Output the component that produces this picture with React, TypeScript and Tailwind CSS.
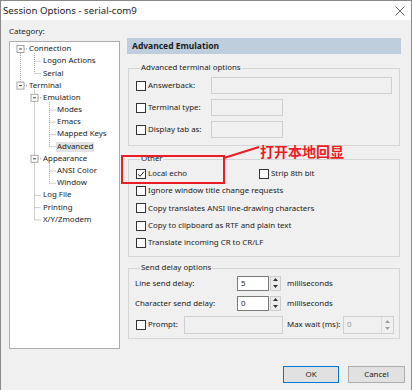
import React from "react";

const rows: { label: string; level: number; hi?: boolean }[] = [
  { label: "Connection", level: 0 },
  { label: "Logon Actions", level: 1 },
  { label: "Serial", level: 1 },
  { label: "Terminal", level: 0 },
  { label: "Emulation", level: 1 },
  { label: "Modes", level: 2 },
  { label: "Emacs", level: 2 },
  { label: "Mapped Keys", level: 2 },
  { label: "Advanced", level: 2, hi: true },
  { label: "Appearance", level: 1 },
  { label: "ANSI Color", level: 2 },
  { label: "Window", level: 2 },
  { label: "Log File", level: 1 },
  { label: "Printing", level: 1 },
  { label: "X/Y/Zmodem", level: 1 },
];

const RH = 12.2;
const cy = (i: number) => 7 + RH * i;

function Box({ checked }: { checked?: boolean }) {
  return (
    <span className="flex h-[10px] w-[10px] shrink-0 items-center justify-center border border-[#333] bg-white">
      {checked && (
        <svg width="8" height="8" viewBox="0 0 8 8">
          <path d="M1 4.2 L3.1 6.3 L7 1.6" stroke="#222" strokeWidth="1" fill="none" />
        </svg>
      )}
    </span>
  );
}

function Spin({ disabled }: { disabled?: boolean }) {
  const c = disabled ? "#a0a0a0" : "#333";
  return (
    <span className="flex h-full flex-col justify-center gap-[1px]">
      <svg width="5" height="3" viewBox="0 0 5 3">
        <path d="M0 3 L2.5 0 L5 3 Z" fill={c} />
      </svg>
      <span className="h-[2px]" />
      <svg width="5" height="3" viewBox="0 0 5 3">
        <path d="M0 0 L2.5 3 L5 0 Z" fill={c} />
      </svg>
    </span>
  );
}

function TreeLines() {
  const exp = (x: number, y: number) => (
    <g key={`e${x}-${y}`}>
      <rect x={x - 3.5} y={y - 3.5} width="7" height="7" fill="#fff" stroke="#a5a5a5" />
      <line x1={x - 1.5} y1={y} x2={x + 1.5} y2={y} stroke="#444" />
    </g>
  );
  const h = (x1: number, x2: number, y: number) => (
    <line key={`h${x1}-${y}`} x1={x1} y1={y} x2={x2} y2={y} stroke="#a0a0a0" strokeDasharray="1 1" />
  );
  const v = (x: number, y1: number, y2: number) => (
    <line key={`v${x}-${y1}`} x1={x} y1={y1} x2={x} y2={y2} stroke="#a0a0a0" strokeDasharray="1 1" />
  );
  return (
    <svg className="pointer-events-none absolute inset-0" width="109" height="305">
      {v(10.5, cy(0), cy(3))}
      {h(14, 18, cy(0))}
      {h(14, 18, cy(3))}
      {v(24.5, cy(0) + 4, cy(2))}
      {h(24.5, 31, cy(1))}
      {h(24.5, 31, cy(2))}
      {v(24.5, cy(3) + 4, cy(14))}
      {h(28, 31, cy(4))}
      {h(28, 31, cy(9))}
      {h(24.5, 31, cy(12))}
      {h(24.5, 31, cy(13))}
      {h(24.5, 31, cy(14))}
      {v(39.5, cy(4) + 4, cy(8))}
      {[5, 6, 7, 8].map((i) => h(39.5, 46, cy(i)))}
      {v(39.5, cy(9) + 4, cy(11))}
      {[10, 11].map((i) => h(39.5, 46, cy(i)))}
      {exp(10.5, cy(0))}
      {exp(10.5, cy(3))}
      {exp(24.5, cy(4))}
      {exp(24.5, cy(9))}
    </svg>
  );
}

export default function App() {
  return (
    <div className="relative h-[390px] w-[412px] overflow-hidden border-x border-t border-[#8a8a8a] bg-[#f0f0f0] font-['Noto_Sans',sans-serif] text-[7.9px] leading-none text-[#1b1b1b]">
      {/* title bar */}
      <div className="flex h-[19px] items-center justify-between bg-white pl-[2px] pr-[6px]">
        <span className="text-[9.7px]">Session Options - serial-com9</span>
        <svg width="10" height="10" viewBox="0 0 10 10">
          <path d="M0.5 0.5 L9.5 9.5 M9.5 0.5 L0.5 9.5" stroke="#555" strokeWidth="0.9" />
        </svg>
      </div>

      <div className="flex items-start">
        {/* category */}
        <div className="ml-[8px] w-[111px] pt-[6px]">
          <div className="flex h-[12px] items-center">Category:</div>
          <div className="relative mt-[3px] h-[308px] border border-[#adadad] bg-white pt-[1px]">
            <TreeLines />
            {rows.map((r) => (
              <div
                key={r.label}
                className={`flex h-[12.2px] items-center ${
                  r.level === 0 ? "pl-[18px]" : r.level === 1 ? "pl-[32px]" : "pl-[46px]"
                }`}
              >
                <span className={`px-[1px] py-[1px] ${r.hi ? "bg-[#e3e3e3]" : ""}`}>{r.label}</span>
              </div>
            ))}
          </div>
        </div>

        {/* right column */}
        <div className="ml-[7px] w-[274px] pt-[18px]">
          <div className="flex h-[16px] items-center bg-[#bfcedc] pl-[5px] text-[8.5px] font-bold">
            Advanced Emulation
          </div>

          {/* advanced terminal options */}
          <div className="ml-[1px] mt-[14px] w-[272px] border border-[#d5d5d5] pb-[7px] pl-[7px]">
            <div className="-mt-[7px] ml-[4px] flex h-[12px] w-fit items-center bg-[#f0f0f0] px-[1px]">
              Advanced terminal options
            </div>
            <div className="mt-[3px] flex flex-col gap-[5px]">
              {[
                ["Answerback:", "w-[181px]"],
                ["Terminal type:", "w-[72px]"],
                ["Display tab as:", "w-[72px]"],
              ].map(([t, w]) => (
                <div key={t} className="flex h-[17px] items-center">
                  <div className="flex w-[75px] items-center gap-[2px]">
                    <Box />
                    <span>{t}</span>
                  </div>
                  <div className={`h-[17px] border border-[#cfcfcf] bg-[#f0f0f0] ${w}`} />
                </div>
              ))}
            </div>
          </div>

          {/* other */}
          <div className="ml-[1px] mt-[13px] w-[272px] border border-[#d5d5d5] pb-[4px] pl-[7px]">
            <div className="-mt-[7px] ml-[4px] flex h-[12px] w-fit items-center bg-[#f0f0f0] px-[1px]">
              Other
            </div>
            <div className="flex h-[17.4px] items-center">
              <div className="flex w-[123px] items-center gap-[2px]">
                <Box checked />
                <span>Local echo</span>
              </div>
              <div className="flex items-center gap-[2px]">
                <Box />
                <span>Strip 8th bit</span>
              </div>
            </div>
            {[
              "Ignore window title change requests",
              "Copy translates ANSI line-drawing characters",
              "Copy to clipboard as RTF and plain text",
              "Translate incoming CR to CR/LF",
            ].map((t) => (
              <div key={t} className="flex h-[17.4px] items-center gap-[2px]">
                <Box />
                <span>{t}</span>
              </div>
            ))}
          </div>

          {/* send delay */}
          <div className="ml-[1px] mt-[11px] w-[272px] border border-[#d5d5d5] pb-[4px] pl-[6px]">
            <div className="-mt-[7px] ml-[5px] flex h-[12px] w-fit items-center bg-[#f0f0f0] px-[1px]">
              Send delay options
            </div>
            {[
              ["Line send delay:", "5", "mt-[2px]"],
              ["Character send delay:", "0", "mt-[5px]"],
            ].map(([t, val, m]) => (
              <div key={t} className={`flex h-[15px] items-center ${m}`}>
                <span className="w-[102px]">{t}</span>
                <div className="flex h-full w-[32px] items-center border border-[#7a7a7a] bg-white pl-[3px]">
                  {val}
                </div>
                <div className="ml-[1px] flex h-full w-[11px] items-center justify-center border border-[#cdcdcd] bg-[#ececec]">
                  <Spin />
                </div>
                <span className="ml-[6px]">milliseconds</span>
              </div>
            ))}
            <div className="mt-[5px] flex h-[18px] items-center">
              <div className="flex w-[49px] items-center gap-[2px] pl-[1px]">
                <Box />
                <span>Prompt:</span>
              </div>
              <div className="h-full w-[99px] border border-[#cfcfcf] bg-[#f0f0f0]" />
              <span className="ml-[4px] w-[56px] whitespace-nowrap">Max wait (ms):</span>
              <div className="flex h-full w-[51px] items-center border border-[#cfcfcf] bg-[#f0f0f0]">
                <span className="flex-1 pl-[3px] text-[#9a9a9a]">0</span>
                <div className="flex h-full w-[12px] items-center justify-center border-l border-[#dadada]">
                  <Spin disabled />
                </div>
              </div>
            </div>
          </div>
        </div>
      </div>

      {/* buttons */}
      <div className="mt-[17px] flex justify-end gap-[9px] pr-[6px]">
        <button className="flex h-[17px] w-[56px] items-center justify-center border border-[#0078d7] bg-[#e1e1e1]">
          OK
        </button>
        <button className="flex h-[17px] w-[57px] items-center justify-center border border-[#adadad] bg-[#e1e1e1]">
          Cancel
        </button>
      </div>

      {/* annotation */}
      <div className="pointer-events-none absolute left-[120px] top-[154px] h-[29px] w-[104px] border-2 border-[#ec1c24]" />
      <svg className="pointer-events-none absolute left-0 top-0" width="412" height="390">
        <line x1="223" y1="157" x2="258" y2="146" stroke="#ec1c24" strokeWidth="2" />
      </svg>
      <div className="pointer-events-none absolute left-[259px] top-[141px] font-['Noto_Sans_CJK_SC',sans-serif] text-[14px] font-bold leading-[18px] text-[#ec1c24]">
        打开本地回显
      </div>
    </div>
  );
}
